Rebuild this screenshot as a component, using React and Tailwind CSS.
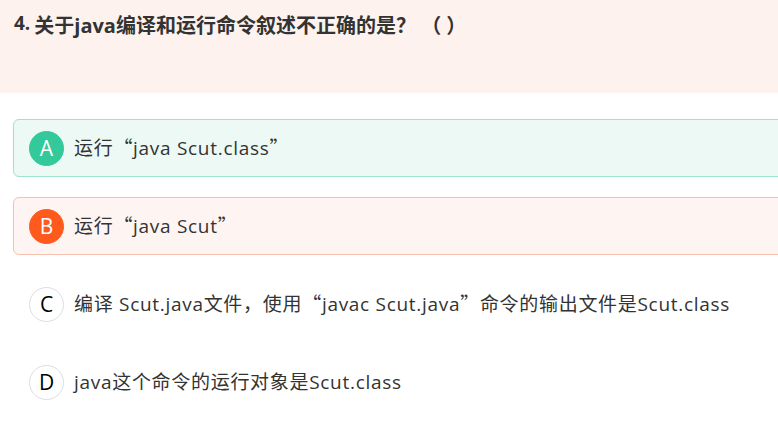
import React from "react";

function Q({ children }) {
  return <span className="font-[family-name:'Noto_Sans_CJK_SC',sans-serif]">{children}</span>;
}

function Row({ letter, variant, children }) {
  const box =
    variant === "right"
      ? "border-[#9de3cb] bg-[#edf9f5]"
      : variant === "wrong"
      ? "border-[#f8c1ae] bg-[#fef4f1]"
      : "border-transparent bg-white";
  const circle =
    variant === "right"
      ? "bg-[#33c99a] text-white border-[#33c99a]"
      : variant === "wrong"
      ? "bg-[#fe5a1e] text-white border-[#fe5a1e]"
      : "bg-white text-black border-[#dedede]";
  return (
    <div className={`ml-[13px] mr-[-20px] h-[58px] rounded-[6px] border flex items-center pl-[15px] ${box}`}>
      <div className={`w-[35px] h-[35px] rounded-full border flex items-center justify-center text-[21px] leading-none shrink-0 ${circle}`}>
        {letter}
      </div>
      <div className="ml-[10px] text-[19px] tracking-[0.7px] text-[#333] whitespace-nowrap">
        {children}
      </div>
    </div>
  );
}

export default function App() {
  return (
    <div className="w-[778px] h-[429px] bg-white overflow-hidden font-[family-name:'Open_Sans','Noto_Sans_CJK_SC',sans-serif]">
      <div className="h-[93px] bg-[#fdf2ee] pl-[14px] pt-[9px] flex items-start">
        <span className="text-[19px] font-bold text-[#333] leading-[28px]">4.</span>
        <span className="ml-[4px] text-[20px] font-bold text-[#333] leading-[32px] whitespace-nowrap">
          关于java编译和运行命令叙述不正确的是？ <Q>（</Q> <Q>）</Q>
        </span>
      </div>
      <div className="mt-[26px] flex flex-col gap-[20px]">
        <Row letter="A" variant="right">
          运行<Q>“</Q>java Scut.class<Q>”</Q>
        </Row>
        <Row letter="B" variant="wrong">
          运行<Q>“</Q>java Scut<Q>”</Q>
        </Row>
        <Row letter="C">
          编译 Scut.java文件，使用<Q>“</Q>javac Scut.java<Q>”</Q>命令的输出文件是Scut.class
        </Row>
        <Row letter="D">java这个命令的运行对象是Scut.class</Row>
      </div>
    </div>
  );
}
